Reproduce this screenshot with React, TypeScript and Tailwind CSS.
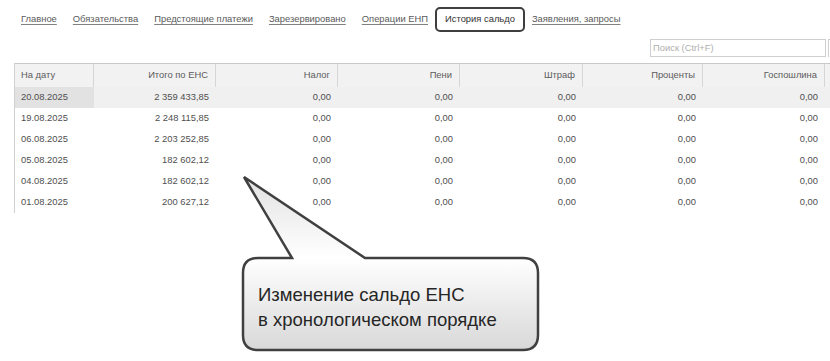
import React from "react";

const tabs = [
  { label: "Главное" },
  { label: "Обязательства" },
  { label: "Предстоящие платежи" },
  { label: "Зарезервировано" },
  { label: "Операции ЕНП" },
  { label: "История сальдо", active: true },
  { label: "Заявления, запросы" },
];

const headers = ["На дату", "Итого по ЕНС", "Налог", "Пени", "Штраф", "Проценты", "Госпошлина"];

const rows = [
  ["20.08.2025", "2 359 433,85"],
  ["19.08.2025", "2 248 115,85"],
  ["06.08.2025", "2 203 252,85"],
  ["05.08.2025", "182 602,12"],
  ["04.08.2025", "182 602,12"],
  ["01.08.2025", "200 627,12"],
];

export default function App() {
  return (
    <div
      className="relative w-[830px] h-[361px] overflow-hidden bg-white"
      style={{ fontFamily: '"Liberation Sans", Arial, sans-serif' }}
    >
      {/* Tabs */}
      <div className="flex items-center pl-[13px] pt-[7px] h-[32px] text-[9.4px]">
        {tabs.map((t) =>
          t.active ? (
            <div
              key={t.label}
              className="h-[25px] flex items-center px-[8px] border-2 border-[#3f3f3f] rounded-[5px] text-[#333] mx-[-1px]"
            >
              {t.label}
            </div>
          ) : (
            <div key={t.label} className="px-[8px] h-[25px] flex items-center">
              <span className="underline text-[#5a5a5a] underline-offset-[2px] decoration-[#808080]">{t.label}</span>
            </div>
          )
        )}
      </div>

      {/* Search */}
      <div className="flex justify-end items-start mt-[7px] h-[24px]">
        <div className="w-[176px] h-[18px] border border-[#cfcfcf] flex items-center pl-[2px] text-[9.4px] text-[#b0b0b0]">
          Поиск (Ctrl+F)
        </div>
        <div className="w-[2px] h-[18px] border-l border-t border-[#cfcfcf] ml-[2px]" />
      </div>

      {/* Table */}
      <div className="ml-[14px] border-l border-[#d0d0d0] text-[9.4px]">
        <div className="grid grid-cols-[79px_122px_122px_122px_123px_120px_122px_1fr] h-[24px] bg-[#f2f2f2] border-t border-[#c9c9c9] text-[#5c5c5c]">
          {headers.map((h, i) => (
            <div
              key={h}
              className={`flex items-center border-r border-[#d6d6d6] ${i === 0 ? "pl-[6px]" : "justify-end pr-[7px]"}`}
            >
              {h}
            </div>
          ))}
          <div />
        </div>
        {rows.map((r, ri) => (
          <div
            key={r[0]}
            className={`grid grid-cols-[79px_122px_122px_122px_123px_120px_122px_1fr] h-[21px] text-[#4f4f4f] ${ri === 0 ? "bg-[#f0f0f0]" : "bg-white"}`}
          >
            <div className={`flex items-center pl-[6px] ${ri === 0 ? "bg-[#e2e2e2]" : ""}`}>{r[0]}</div>
            <div className="flex items-center justify-end pr-[7px]">{r[1]}</div>
            {[0, 1, 2, 3, 4].map((k) => (
              <div key={k} className="flex items-center justify-end pr-[7px]">
                0,00
              </div>
            ))}
            <div />
          </div>
        ))}
      </div>

      {/* Callout */}
      <div className="absolute left-0 top-0 w-[830px] h-[361px] pointer-events-none">
        <svg width="830" height="361" className="absolute left-0 top-0">
          <defs>
            <linearGradient id="cg" x1="0" y1="177" x2="0" y2="350" gradientUnits="userSpaceOnUse">
              <stop offset="0" stopColor="#e2e2e2" />
              <stop offset="0.47" stopColor="#ffffff" />
              <stop offset="1" stopColor="#d8d8d8" />
            </linearGradient>
          </defs>
          <path
            d="M292 258 L258 258 Q243 258 243 273 L243 335 Q243 350 258 350 L523 350 Q538 350 538 335 L538 273 Q538 258 523 258 L365 258 L244 177 Z"
            fill="url(#cg)"
            stroke="#404040"
            strokeWidth="2.5"
            strokeLinejoin="miter"
          />
        </svg>
        <div className="absolute left-[258px] top-[282px] text-[18.5px] leading-[25px] text-[#262626]">
          <div>Изменение сальдо ЕНС</div>
          <div>в хронологическом порядке</div>
        </div>
      </div>
    </div>
  );
}
